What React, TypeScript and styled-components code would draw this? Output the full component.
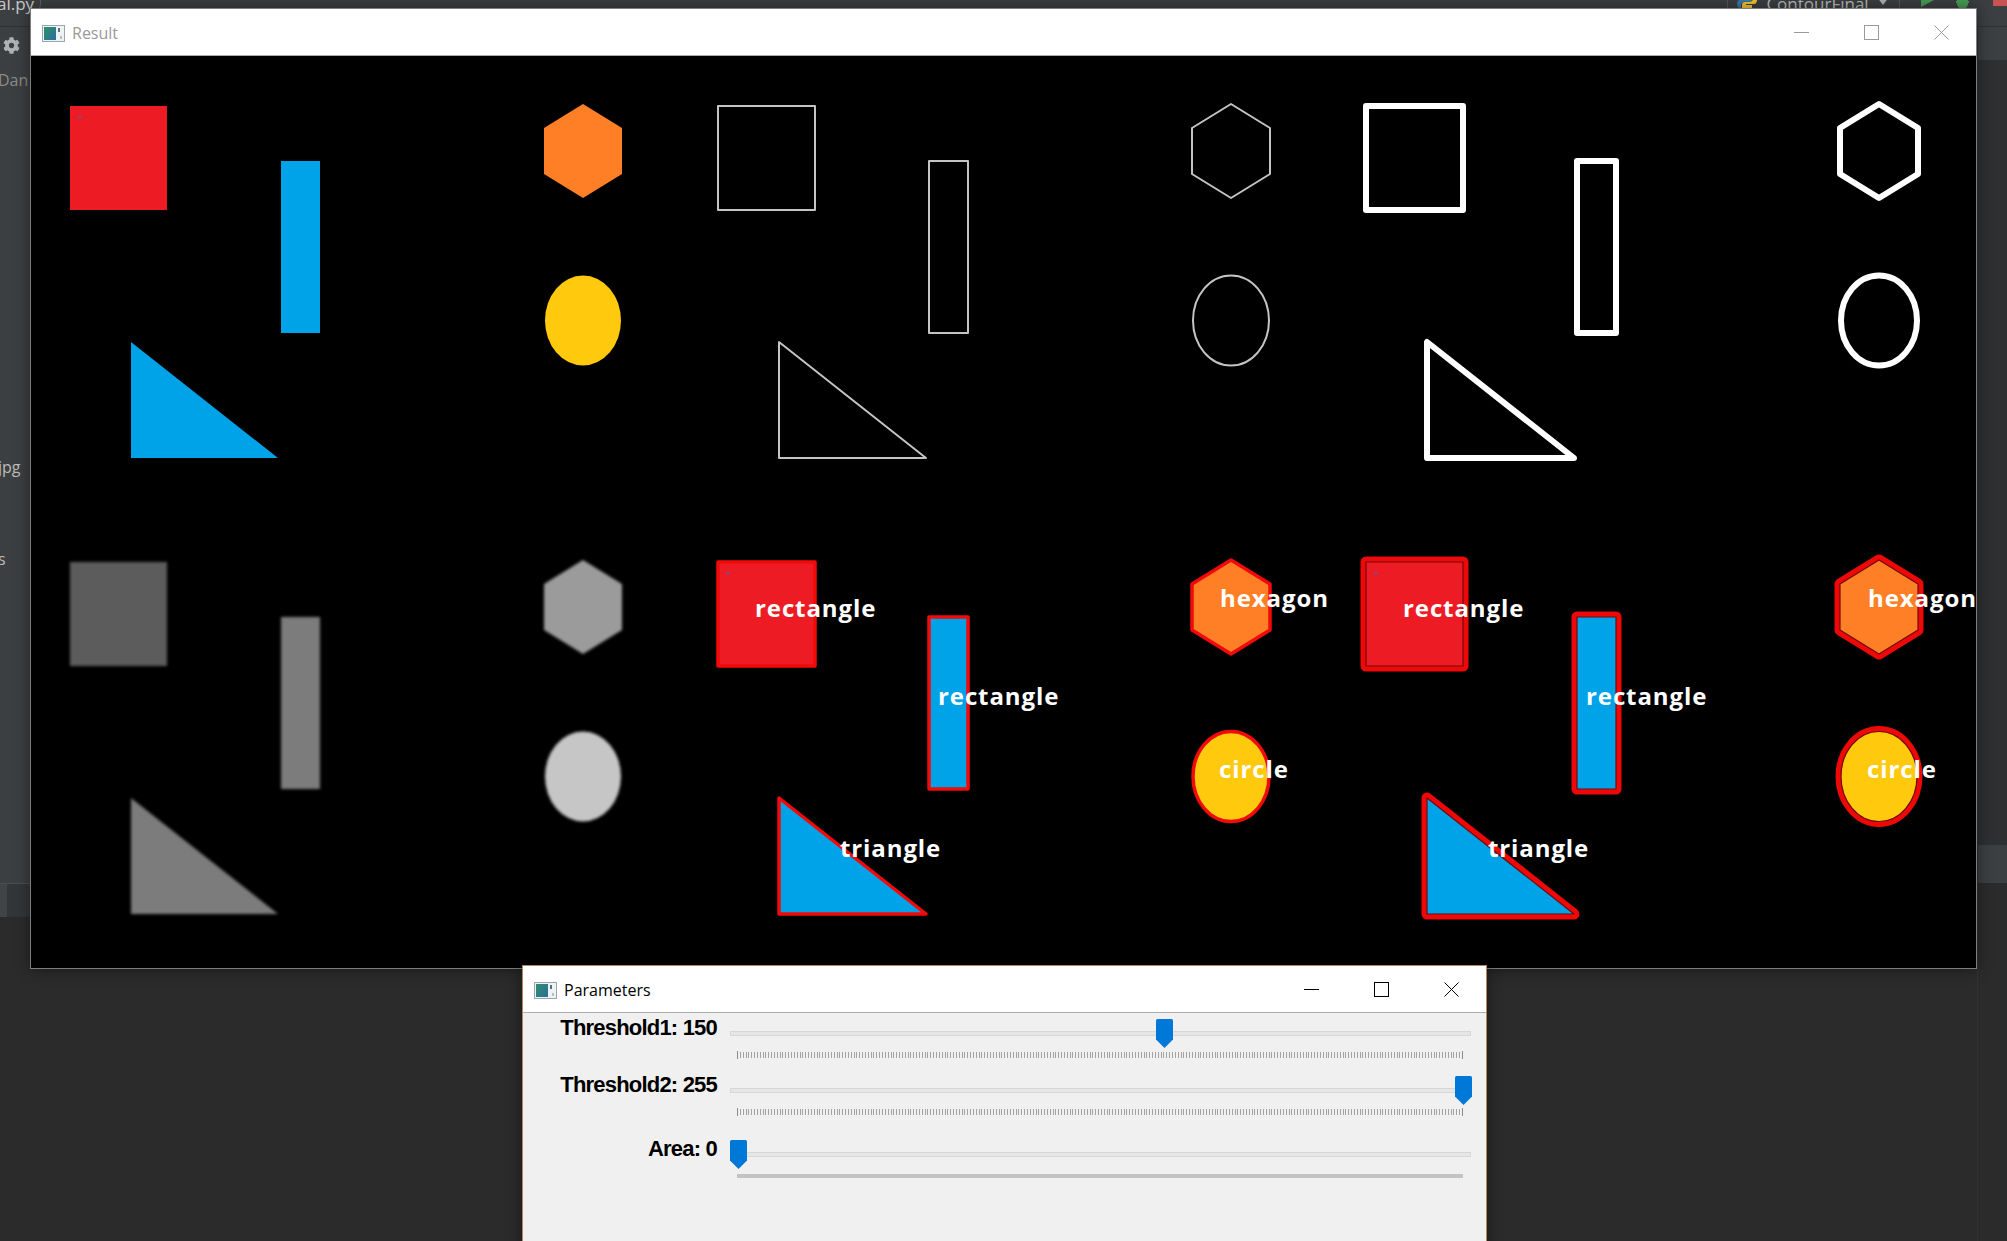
import React from "react";
import styled, { createGlobalStyle } from "styled-components";
import { FaCog } from "react-icons/fa";

const GlobalStyle = createGlobalStyle`
  * { box-sizing: border-box; }
  html, body { margin: 0; padding: 0; background: #2b2b2b; }
  body { font-family: "Open Sans", "Noto Sans", "Liberation Sans", sans-serif; overflow: hidden; }
`;

/* ---------- IDE background ---------- */

const Desktop = styled.div`
  position: relative;
  width: 2007px;
  height: 1241px;
  overflow: hidden;
  background: #2b2b2b;
  display: flex;
  flex-direction: column;
`;

const TopBar = styled.header`
  height: 27px;
  flex: none;
  display: flex;
  align-items: flex-start;
  background: #3c3f41;
  color: #bbbbbb;
  font-size: 17px;
  line-height: 20px;
  overflow: hidden;
  border-bottom: 1px solid #323232;
`;

const FileTab = styled.div`
  width: 44px;
  height: 20px;
  margin-left: -3px;
  margin-top: -6px;
  padding-right: 4px;
  white-space: nowrap;
  color: #c9c9c9;
  border-right: 1px solid #5e6163;
  border-bottom-right-radius: 10px;
`;

const RunGroup = styled.div`
  margin-left: auto;
  width: 280px;
  display: flex;
  align-items: flex-start;
`;

const ToolSep = styled.div<{ $ml?: number }>`
  width: 1px;
  height: 20px;
  margin-left: ${(p) => p.$ml ?? 0}px;
  background: #555859;
`;

const RunConfigName = styled.span`
  margin-left: 9px;
  margin-top: -6px;
  white-space: nowrap;
  color: #bbbbbb;
`;

const IconSlot = styled.div<{ $ml: number; $mt: number }>`
  margin-left: ${(p) => p.$ml}px;
  margin-top: ${(p) => p.$mt}px;
  display: flex;
`;

const IdeBody = styled.div`
  flex: 1;
  display: flex;
  min-height: 0;
`;

const LeftStrip = styled.aside`
  width: 30px;
  flex: none;
  display: flex;
  flex-direction: column;
`;

const ProjectPanel = styled.div`
  height: 856px;
  background: #3c3f41;
  display: flex;
  flex-direction: column;
  overflow: hidden;
  font-size: 17px;
  line-height: 20px;
`;

const GearSlot = styled.div`
  margin-top: 10px;
  margin-left: 3px;
  height: 17px;
  display: flex;
  color: #afb1b3;
`;

const TreeText = styled.div<{ $mt: number; $muted?: boolean }>`
  margin-top: ${(p) => p.$mt}px;
  margin-left: -2px;
  white-space: nowrap;
  font-size: 16px;
  color: ${(p) => (p.$muted ? "#8a8a8a" : "#bbbbbb")};
`;

const ToolStrip = styled.div`
  height: 34px;
  display: flex;
  border-top: 1px solid #4b4e50;
  background: #333638;
`;

const ToolStripEdge = styled.div`
  width: 7px;
  background: #414446;
`;

const Editor = styled.main`
  flex: 1;
  background: #2b2b2b;
`;

const RightStrip = styled.aside`
  width: 30px;
  flex: none;
  display: flex;
  flex-direction: column;
  border-left: 1px solid #323232;
`;

const RightBlock = styled.div<{ $h: number; $bg: string }>`
  height: ${(p) => p.$h}px;
  background: ${(p) => p.$bg};
  flex: none;
`;

/* ---------- OS windows ---------- */

const Window = styled.section<{ $active?: boolean }>`
  position: absolute;
  display: flex;
  flex-direction: column;
  background: #ffffff;
  border: 1px solid ${(p) => (p.$active ? "#b9835f" : "#7d7d7d")};
  box-shadow: 0 0 14px rgba(0, 0, 0, 0.45);
`;

const ResultWindow = styled(Window)`
  left: 30px;
  top: 8px;
  width: 1947px;
  height: 961px;
`;

const ParamsWindow = styled(Window)`
  left: 522px;
  top: 965px;
  width: 965px;
  height: 300px;
`;

const TitleBar = styled.div`
  height: 47px;
  flex: none;
  display: flex;
  align-items: center;
  padding-left: 11px;
  padding-top: 2px;
  border-bottom: 1px solid #adadad;
  background: #ffffff;
`;

const TitleText = styled.span<{ $active?: boolean }>`
  margin-left: 7px;
  font-size: 16px;
  color: ${(p) => (p.$active ? "#000000" : "#999999")};
  white-space: nowrap;
`;

const Controls = styled.div`
  margin-left: auto;
  display: flex;
  height: 100%;
  margin-top: -2px;
`;

const CtrlButton = styled.div`
  width: 70px;
  height: 100%;
  display: flex;
  align-items: center;
  justify-content: center;
`;

const ImageArea = styled.div`
  flex: 1;
  background: #000000;
  display: grid;
  grid-template-columns: repeat(3, 648px);
  grid-template-rows: repeat(2, 456px);
  overflow: hidden;
`;

const PanelSvg = styled.svg`
  display: block;
  width: 648px;
  height: 456px;
  overflow: hidden;
`;

const ShapeLabel = styled.text`
  font-family: "Open Sans", "Lato", sans-serif;
  font-weight: 700;
  font-size: 24px;
  letter-spacing: 0.9px;
  fill: #ffffff;
`;

const ParamsBody = styled.div`
  flex: 1;
  background: #f0f0f0;
  display: flex;
  flex-direction: column;
`;

const TrackRow = styled.div<{ $h: number }>`
  height: ${(p) => p.$h}px;
  flex: none;
  display: grid;
  grid-template-columns: 207px 741px;
`;

const TrackLabel = styled.div`
  padding-top: 3px;
  padding-right: 13px;
  text-align: right;
  font-family: "Liberation Sans", Arial, sans-serif;
  font-weight: 700;
  font-size: 22px;
  line-height: 24px;
  letter-spacing: -0.8px;
  color: #000000;
  white-space: nowrap;
`;

const SliderCell = styled.div`
  position: relative;
  display: flex;
  flex-direction: column;
`;

const Groove = styled.div`
  margin-top: 18px;
  height: 5px;
  background: #e6e6e6;
  border: 1px solid #d7d7d7;
`;

const Ticks = styled.div`
  position: relative;
  margin: 16px 8px 0 7px;
  height: 6px;
  background: repeating-linear-gradient(
    90deg,
    #a2a2a2 0 1px,
    transparent 1px 2.843px
  );
  &::before,
  &::after {
    content: "";
    position: absolute;
    top: -1px;
    width: 1px;
    height: 8px;
    background: #8c8c8c;
  }
  &::before { left: 0; }
  &::after { right: 0; }
`;

const DenseTicks = styled.div`
  margin: 17px 8px 0 7px;
  height: 4px;
  background: #c3c3c3;
`;

const ThumbBox = styled.div`
  position: absolute;
  top: 6px;
  width: 17px;
  height: 29px;
  display: flex;
`;

/* ---------- drawings ---------- */

type Variant = "color" | "gray" | "thin" | "thick" | "labeled" | "labeledBold";

const COLORS: Record<string, string> = {
  red: "#ed1c24",
  blue: "#00a2e8",
  orange: "#ff7f27",
  yellow: "#ffc90e",
};

const GRAYS: Record<string, string> = {
  red: "#5b5b5b",
  blue: "#7b7b7b",
  orange: "#9b9b9b",
  yellow: "#c6c6c6",
};

type ShapeProps = React.SVGProps<SVGElement> & Record<string, unknown>;

interface ShapeDef {
  key: string;
  color: string;
  draw: (p: ShapeProps) => React.ReactElement;
  label: { text: string; x: number; y: number };
}

const SHAPES: ShapeDef[] = [
  {
    key: "sq",
    color: "red",
    draw: (p) => <rect x={39} y={50} width={97} height={104} {...(p as object)} />,
    label: { text: "rectangle", x: 76, y: 105 },
  },
  {
    key: "rc",
    color: "blue",
    draw: (p) => <rect x={250} y={105} width={39} height={172} {...(p as object)} />,
    label: { text: "rectangle", x: 259, y: 193 },
  },
  {
    key: "tri",
    color: "blue",
    draw: (p) => <polygon points="100,286 100,402 247,402" {...(p as object)} />,
    label: { text: "triangle", x: 161, y: 345 },
  },
  {
    key: "hex",
    color: "orange",
    draw: (p) => (
      <polygon points="552,48 591,72 591,118 552,142 513,118 513,72" {...(p as object)} />
    ),
    label: { text: "hexagon", x: 541, y: 95 },
  },
  {
    key: "ell",
    color: "yellow",
    draw: (p) => <ellipse cx={552} cy={264.5} rx={38} ry={45} {...(p as object)} />,
    label: { text: "circle", x: 540, y: 266 },
  },
];

function renderShape(s: ShapeDef, v: Variant, fid: string) {
  const c = COLORS[s.color];
  switch (v) {
    case "color":
      return s.draw({ fill: c });
    case "gray":
      return s.draw({ fill: GRAYS[s.color], filter: `url(#${fid})` });
    case "thin":
      return s.draw({
        fill: "none",
        stroke: "#c4c4c4",
        strokeWidth: 2,
        strokeLinejoin: "round",
        filter: `url(#${fid})`,
      });
    case "thick":
      return s.draw({
        fill: "none",
        stroke: "#ffffff",
        strokeWidth: 6,
        strokeLinejoin: "round",
      });
    case "labeled":
      return s.draw({
        fill: c,
        stroke: "#f20a0a",
        strokeWidth: 3.5,
        strokeLinejoin: "round",
      });
    case "labeledBold":
      return (
        <>
          {s.draw({ fill: "#ee0808", stroke: "#ee0808", strokeWidth: 11, strokeLinejoin: "round" })}
          {s.draw({ fill: c, stroke: "#6e0c0c", strokeWidth: 1.2, strokeLinejoin: "round" })}
        </>
      );
  }
}

function Panel({ variant }: { variant: Variant }) {
  const fid = `soft-${variant}`;
  const withDot = variant === "color" || variant === "labeled" || variant === "labeledBold";
  const withLabels = variant === "labeled" || variant === "labeledBold";
  return (
    <PanelSvg viewBox="0 0 648 456" width={648} height={456}>
      <defs>
        <filter id={fid} x="-20%" y="-20%" width="140%" height="140%">
          <feGaussianBlur stdDeviation={variant === "gray" ? 1.6 : 0.5} />
        </filter>
      </defs>
      {SHAPES.map((s) => (
        <g key={s.key}>{renderShape(s, variant, fid)}</g>
      ))}
      {withDot && <circle cx={49} cy={61} r={1.6} fill="#7c4c98" />}
      {withLabels &&
        SHAPES.map((s) => (
          <ShapeLabel key={`l-${s.key}`} x={s.label.x} y={s.label.y}>
            {s.label.text}
          </ShapeLabel>
        ))}
    </PanelSvg>
  );
}

function CvIcon() {
  return (
    <svg width={23} height={17} viewBox="0 0 23 17">
      <defs>
        <linearGradient id="cvg" x1="0" y1="0" x2="1" y2="1">
          <stop offset="0" stopColor="#2f8f6e" />
          <stop offset="1" stopColor="#2a6f9a" />
        </linearGradient>
      </defs>
      <rect x={0.5} y={0.5} width={22} height={16} fill="#eef2f3" stroke="#9aa6ad" />
      <rect x={2} y={2} width={12} height={13} fill="url(#cvg)" />
      <rect x={16} y={3} width={2} height={4} fill="#56707e" />
      <rect x={18} y={11} width={2} height={3} fill="#b3c0c6" />
    </svg>
  );
}

function WinControls({ color }: { color: string }) {
  return (
    <Controls>
      <CtrlButton>
        <svg width={15} height={15} viewBox="0 0 15 15">
          <line x1={0} y1={7.5} x2={15} y2={7.5} stroke={color} strokeWidth={1} />
        </svg>
      </CtrlButton>
      <CtrlButton>
        <svg width={15} height={15} viewBox="0 0 15 15">
          <rect x={0.5} y={0.5} width={14} height={14} fill="none" stroke={color} strokeWidth={1} />
        </svg>
      </CtrlButton>
      <CtrlButton>
        <svg width={15} height={15} viewBox="0 0 15 15">
          <path d="M0.5 0.5 L14.5 14.5 M14.5 0.5 L0.5 14.5" stroke={color} strokeWidth={1} />
        </svg>
      </CtrlButton>
    </Controls>
  );
}

function Thumb() {
  return (
    <svg width={17} height={29} viewBox="0 0 17 29">
      <path d="M1.5 0 H15.5 Q17 0 17 1.5 V20.5 L8.5 29 L0 20.5 V1.5 Q0 0 1.5 0 Z" fill="#0078d7" />
    </svg>
  );
}

function Trackbar({
  label,
  value,
  max,
  height,
  dense,
}: {
  label: string;
  value: number;
  max: number;
  height: number;
  dense?: boolean;
}) {
  const center = 8 + (value / max) * 725;
  return (
    <TrackRow $h={height}>
      <TrackLabel>
        {label}: {value}
      </TrackLabel>
      <SliderCell>
        <Groove />
        {dense ? <DenseTicks /> : <Ticks />}
        <ThumbBox style={{ left: center - 8.5 }}>
          <Thumb />
        </ThumbBox>
      </SliderCell>
    </TrackRow>
  );
}

export default function App() {
  return (
    <>
      <GlobalStyle />
      <Desktop>
        <TopBar>
          <FileTab>al.py</FileTab>
          <RunGroup>
            <ToolSep />
            <IconSlot $ml={10} $mt={-8}>
              <svg width={20} height={20} viewBox="0 0 20 20">
                <path d="M10 1 C5 1 5 3 5 5 V7 H11 V8 H3 C1 8 0 10 0 12 C0 15 2 16 4 16 V13 C4 11 6 10 8 10 H12 C14 10 15 9 15 7 V4 C15 2 13 1 10 1 Z" fill="#3c78aa" />
                <path d="M10 19 C15 19 15 17 15 15 V13 H9 V12 H17 C19 12 20 10 20 8 C20 5 18 4 16 4 V7 C16 9 14 10 12 10 H8 C6 10 5 11 5 13 V16 C5 18 7 19 10 19 Z" fill="#f2c430" />
              </svg>
            </IconSlot>
            <RunConfigName>ContourFinal</RunConfigName>
            <IconSlot $ml={8} $mt={-3}>
              <svg width={12} height={8} viewBox="0 0 12 8">
                <path d="M0 0 H12 L6 8 Z" fill="#afb1b3" />
              </svg>
            </IconSlot>
            <ToolSep $ml={10} />
            <IconSlot $ml={22} $mt={-7}>
              <svg width={13} height={14} viewBox="0 0 13 14">
                <path d="M0 0 L13 7 L0 14 Z" fill="#499c54" />
              </svg>
            </IconSlot>
            <IconSlot $ml={21} $mt={-8}>
              <svg width={15} height={16} viewBox="0 0 15 16">
                <path d="M3 4 H12 V12 C12 14 10 16 7.5 16 C5 16 3 14 3 12 Z M1 6 H14 M1 10 H14 M5 2 L6.5 4 M10 2 L8.5 4" stroke="#499c54" strokeWidth={2} fill="#499c54" />
              </svg>
            </IconSlot>
            <IconSlot $ml={23} $mt={-8}>
              <svg width={14} height={14} viewBox="0 0 14 14">
                <rect x={0} y={0} width={14} height={14} fill="#c75450" />
              </svg>
            </IconSlot>
          </RunGroup>
        </TopBar>

        <IdeBody>
          <LeftStrip>
            <ProjectPanel>
              <GearSlot>
                <FaCog size={17} />
              </GearSlot>
              <TreeText $mt={16} $muted>
                Dan
              </TreeText>
              <TreeText $mt={367}>jpg</TreeText>
              <TreeText $mt={72}>s</TreeText>
            </ProjectPanel>
            <ToolStrip>
              <ToolStripEdge />
            </ToolStrip>
          </LeftStrip>
          <Editor />
          <RightStrip>
            <RightBlock $h={33} $bg="#3c3f41" />
            <RightBlock $h={785} $bg="#2d2f30" />
            <RightBlock $h={38} $bg="#3c3f41" />
          </RightStrip>
        </IdeBody>

        <ResultWindow>
          <TitleBar>
            <CvIcon />
            <TitleText>Result</TitleText>
            <WinControls color="#9a9a9a" />
          </TitleBar>
          <ImageArea>
            <Panel variant="color" />
            <Panel variant="thin" />
            <Panel variant="thick" />
            <Panel variant="gray" />
            <Panel variant="labeled" />
            <Panel variant="labeledBold" />
          </ImageArea>
        </ResultWindow>

        <ParamsWindow $active>
          <TitleBar>
            <CvIcon />
            <TitleText $active>Parameters</TitleText>
            <WinControls color="#000000" />
          </TitleBar>
          <ParamsBody>
            <Trackbar label="Threshold1" value={150} max={255} height={57} />
            <Trackbar label="Threshold2" value={255} max={255} height={64} />
            <Trackbar label="Area" value={0} max={30000} height={80} dense />
          </ParamsBody>
        </ParamsWindow>
      </Desktop>
    </>
  );
}
